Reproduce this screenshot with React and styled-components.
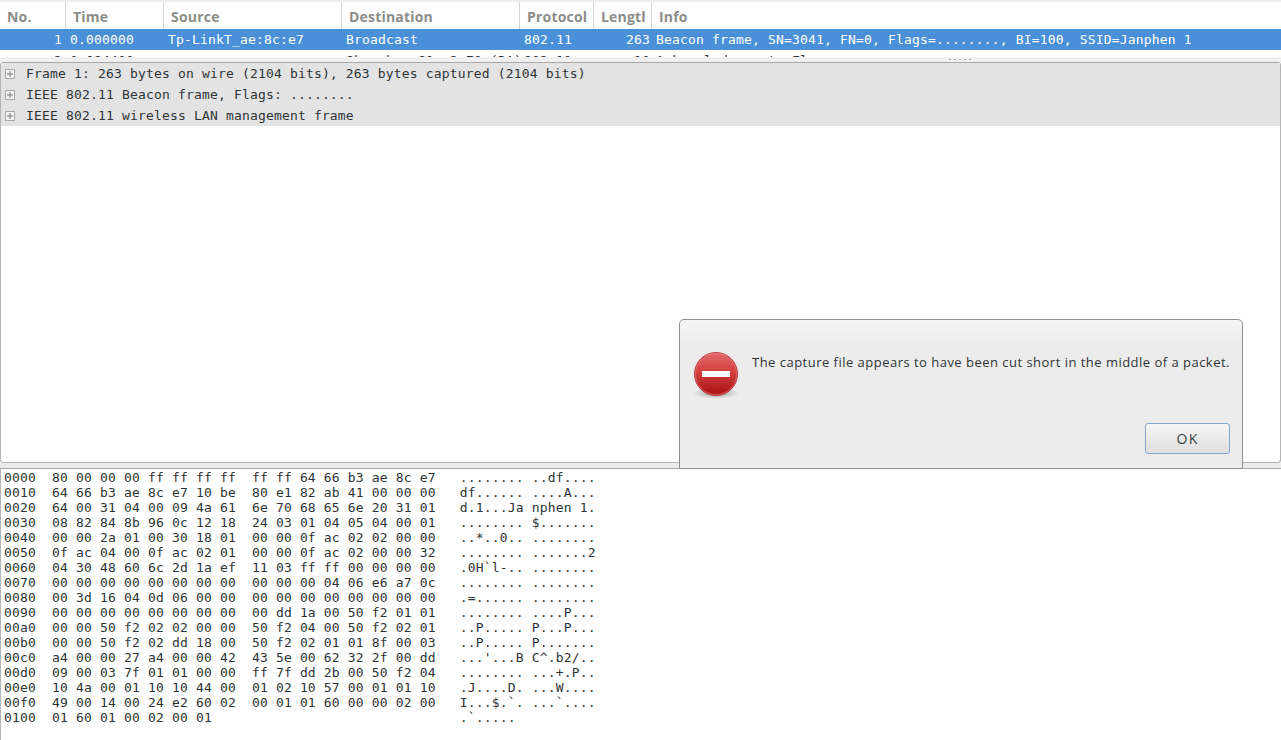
import React from "react";
import styled, { createGlobalStyle } from "styled-components";

const GlobalStyle = createGlobalStyle`
  html, body {
    margin: 0;
    padding: 0;
    background: #fff;
  }
`;

const MONO = `"DejaVu Sans Mono", "Liberation Mono", monospace`;
const UI = `"Open Sans", "Noto Sans", sans-serif`;

const columns = [
  { name: "No.", width: 66, right: true },
  { name: "Time", width: 98 },
  { name: "Source", width: 178 },
  { name: "Destination", width: 178 },
  { name: "Protocol", width: 74 },
  { name: "Length", width: 58, right: true },
  { name: "Info", width: 629 },
];

const packets = [
  ["1", "0.000000", "Tp-LinkT_ae:8c:e7", "Broadcast", "802.11", "263", "Beacon frame, SN=3041, FN=0, Flags=........, BI=100, SSID=Janphen 1"],
  ["2", "0.084400", "", "Shenzhen_S1:c2:70 (RA)", "802.11", "10", "Acknowledgement, Flags=........"],
];

const details = [
  "Frame 1: 263 bytes on wire (2104 bits), 263 bytes captured (2104 bits)",
  "IEEE 802.11 Beacon frame, Flags: ........",
  "IEEE 802.11 wireless LAN management frame",
];

const hexDump = [
  "0000  80 00 00 00 ff ff ff ff  ff ff 64 66 b3 ae 8c e7   ........ ..df....",
  "0010  64 66 b3 ae 8c e7 10 be  80 e1 82 ab 41 00 00 00   df...... ....A...",
  "0020  64 00 31 04 00 09 4a 61  6e 70 68 65 6e 20 31 01   d.1...Ja nphen 1.",
  "0030  08 82 84 8b 96 0c 12 18  24 03 01 04 05 04 00 01   ........ $.......",
  "0040  00 00 2a 01 00 30 18 01  00 00 0f ac 02 02 00 00   ..*..0.. ........",
  "0050  0f ac 04 00 0f ac 02 01  00 00 0f ac 02 00 00 32   ........ .......2",
  "0060  04 30 48 60 6c 2d 1a ef  11 03 ff ff 00 00 00 00   .0H`l-.. ........",
  "0070  00 00 00 00 00 00 00 00  00 00 00 04 06 e6 a7 0c   ........ ........",
  "0080  00 3d 16 04 0d 06 00 00  00 00 00 00 00 00 00 00   .=...... ........",
  "0090  00 00 00 00 00 00 00 00  00 dd 1a 00 50 f2 01 01   ........ ....P...",
  "00a0  00 00 50 f2 02 02 00 00  50 f2 04 00 50 f2 02 01   ..P..... P...P...",
  "00b0  00 00 50 f2 02 dd 18 00  50 f2 02 01 01 8f 00 03   ..P..... P.......",
  "00c0  a4 00 00 27 a4 00 00 42  43 5e 00 62 32 2f 00 dd   ...'...B C^.b2/..",
  "00d0  09 00 03 7f 01 01 00 00  ff 7f dd 2b 00 50 f2 04   ........ ...+.P..",
  "00e0  10 4a 00 01 10 10 44 00  01 02 10 57 00 01 01 10   .J....D. ...W....",
  "00f0  49 00 14 00 24 e2 60 02  00 01 01 60 00 00 02 00   I...$.`. ...`....",
  "0100  01 60 01 00 02 00 01                               .`.....",
];

const Window = styled.div`
  position: relative;
  width: 1281px;
  height: 740px;
  overflow: hidden;
  display: flex;
  flex-direction: column;
  background: #fff;
`;

const PacketPane = styled.div`
  height: 55px;
  padding-top: 2px;
  overflow: hidden;
  background: #fff;
  box-shadow: inset 0 2px 0 #eeeeee;
`;

const HeaderRow = styled.div`
  display: flex;
  height: 27px;
`;

const HeaderCell = styled.div`
  box-sizing: border-box;
  width: ${(p) => p.$width}px;
  padding: 6px 6px 0 7px;
  border-right: 1px solid #d6d6d6;

  &:last-child {
    border-right: 0;
  }
`;

const HeaderLabel = styled.span`
  display: block;
  font: 700 14px/18px ${UI};
  letter-spacing: 0.2px;
  color: #8b8d89;
  overflow: hidden;
  white-space: nowrap;
`;

const PacketRow = styled.div`
  display: flex;
  height: 21px;
  background: ${(p) => (p.$selected ? "#4a90d9" : "#fff")};
  color: ${(p) => (p.$selected ? "#fff" : "#2e3436")};
`;

const PacketCell = styled.div`
  box-sizing: border-box;
  width: ${(p) => p.$width}px;
  padding: ${(p) => (p.$right ? "0 2px 0 0" : "0 0 0 4px")};
  text-align: ${(p) => (p.$right ? "right" : "left")};
  font: 13px/21px ${MONO};
  letter-spacing: 0.17px;
  white-space: pre;
  overflow: hidden;
`;

const NumberCell = styled(PacketCell)`
  padding: 0 4px 0 0;
`;

const Handle = styled.div`
  height: 5px;
  background: #f0f0f0;
  display: flex;
  justify-content: center;
  align-items: center;
  padding-left: 640px;
  box-sizing: border-box;
`;

const HandleDots = styled.div`
  width: 23px;
  height: 1px;
  background: repeating-linear-gradient(90deg, #a8a8a8 0 2px, transparent 2px 5px);
`;

const PlainHandle = styled.div`
  height: 5px;
  background: #ebebeb;
`;

const TreePane = styled.div`
  flex: 1;
  border: 1px solid #b4b4b4;
  border-top-color: #a9a9a9;
  border-radius: 3px;
  background: #fff;
`;

const TreeRow = styled.div`
  display: flex;
  align-items: center;
  height: 21px;
  background: #e3e3e3;
  font: 13px/21px ${MONO};
  letter-spacing: 0.17px;
  color: #2e3436;
  white-space: pre;
`;

const Expander = styled.span`
  position: relative;
  box-sizing: border-box;
  width: 10px;
  height: 10px;
  margin: 0 11px 0 4px;
  border: 1px solid #a8a8a8;
  background: #f2f2f2;

  &::before,
  &::after {
    content: "";
    position: absolute;
    background: #777;
  }
  &::before {
    left: 1px;
    right: 1px;
    top: 3px;
    height: 2px;
    transform: scaleY(0.5);
  }
  &::after {
    top: 1px;
    bottom: 1px;
    left: 3px;
    width: 2px;
    transform: scaleX(0.5);
  }
`;

const BytesPane = styled.div`
  height: 272px;
  border-top: 1px solid #a9a9a9;
  border-left: 1px solid #b4b4b4;
  box-sizing: border-box;
  padding: 1px 0 0 3px;
  background: #fff;
`;

const HexLine = styled.div`
  font: 13px/15px ${MONO};
  letter-spacing: 0.17px;
  color: #2e3436;
  white-space: pre;
`;

const Dialog = styled.div`
  position: absolute;
  left: 679px;
  top: 319px;
  box-sizing: border-box;
  width: 564px;
  height: 150px;
  border: 1px solid #8e8e8e;
  border-radius: 5px 5px 0 0;
  background: linear-gradient(#f6f6f5 0, #ececec 22px);
  display: flex;
  flex-direction: column;
  padding: 31px 12px 14px 13px;
`;

const DialogBody = styled.div`
  display: flex;
  flex: 1;
  gap: 13px;
`;

const DialogText = styled.div`
  padding-top: 1px;
  font: 13px/20px ${UI};
  letter-spacing: 0.48px;
  color: #2e3436;
  white-space: nowrap;
`;

const DialogActions = styled.div`
  display: flex;
  justify-content: flex-end;
`;

const OkButton = styled.button`
  width: 85px;
  height: 31px;
  padding: 0;
  border: 1px solid #7fa5d2;
  border-radius: 3px;
  background: linear-gradient(#f7f7f7, #dedede);
  font: 14px/20px ${UI};
  letter-spacing: 1.2px;
  color: #3a3f40;
`;

const StopIcon = () => (
  <svg width="46" height="48" viewBox="0 0 46 48" aria-hidden="true">
    <defs>
      <linearGradient id="stopFill" x1="0" y1="0" x2="0" y2="1">
        <stop offset="0" stopColor="#e66a6c" />
        <stop offset="0.5" stopColor="#cf3a3a" />
        <stop offset="1" stopColor="#a90f10" />
      </linearGradient>
      <radialGradient id="stopShadow" cx="0.5" cy="0.5" r="0.5">
        <stop offset="0" stopColor="#000" stopOpacity="0.35" />
        <stop offset="1" stopColor="#000" stopOpacity="0" />
      </radialGradient>
    </defs>
    <ellipse cx="23" cy="42" rx="23" ry="6" fill="url(#stopShadow)" />
    <circle cx="23" cy="23" r="21.5" fill="url(#stopFill)" stroke="#c03a3c" />
    <circle cx="23" cy="23" r="20.5" fill="none" stroke="#ef9a9a" strokeOpacity="0.45" />
    <rect x="9" y="20" width="28" height="6" fill="#fff" />
  </svg>
);

const App = () => {
  return (
    <Window>
      <GlobalStyle />
      <PacketPane>
        <HeaderRow>
          {columns.map((c) => (
            <HeaderCell key={c.name} $width={c.width}>
              <HeaderLabel>{c.name}</HeaderLabel>
            </HeaderCell>
          ))}
        </HeaderRow>
        {packets.map((row, i) => (
          <PacketRow key={row[0]} $selected={i === 0}>
            {row.map((text, j) =>
              j === 0 ? (
                <NumberCell key={j} $width={columns[j].width} $right>
                  {text}
                </NumberCell>
              ) : (
                <PacketCell key={j} $width={columns[j].width} $right={columns[j].right}>
                  {text}
                </PacketCell>
              )
            )}
          </PacketRow>
        ))}
      </PacketPane>
      <Handle>
        <HandleDots />
      </Handle>
      <TreePane>
        {details.map((text) => (
          <TreeRow key={text}>
            <Expander />
            {text}
          </TreeRow>
        ))}
      </TreePane>
      <PlainHandle />
      <BytesPane>
        {hexDump.map((line) => (
          <HexLine key={line}>{line}</HexLine>
        ))}
      </BytesPane>
      <Dialog>
        <DialogBody>
          <StopIcon />
          <DialogText>The capture file appears to have been cut short in the middle of a packet.</DialogText>
        </DialogBody>
        <DialogActions>
          <OkButton>OK</OkButton>
        </DialogActions>
      </Dialog>
    </Window>
  );
};

export default App;
